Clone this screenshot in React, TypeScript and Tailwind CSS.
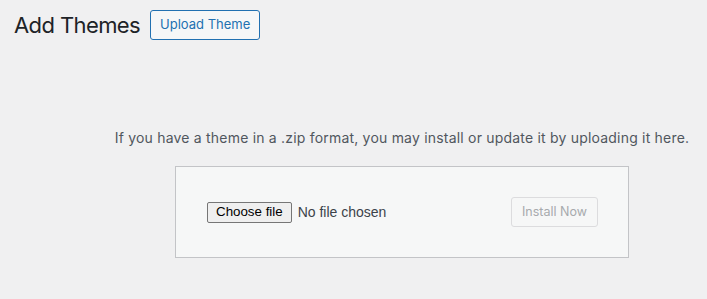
export default function App() {
  return (
    <div className="min-h-screen w-full overflow-hidden bg-[#f0f0f1] text-[#3c434a] font-['Inter','Noto_Sans',sans-serif]">
      <div className="flex items-center gap-[10px] pl-[14px] pt-[10px]">
        <h1 className="text-[22px] leading-[30px] font-normal tracking-[-0.6px] text-[#1d2327]">Add Themes</h1>
        <button className="h-[30px] px-[9px] rounded-[3px] border border-[#2271b1] bg-[#f6f7f7] text-[13px] text-[#2271b1]">
          Upload Theme
        </button>
      </div>

      <div className="ml-[14px] w-[776px] flex flex-col items-center">
        <p className="mt-[87px] text-[14px] leading-[21px] tracking-[0.2px] text-[#50575e]">
          If you have a theme in a .zip format, you may install or update it by uploading it here.
        </p>

        <form className="mt-[18px] w-[454px] border border-[#c3c4c7] bg-[#f6f7f7] py-[30px] pl-[31px] pr-[30px] flex items-center justify-between">
          <div className="flex items-center gap-[6px] font-['Liberation_Sans',Arial,sans-serif]">
            <span className="h-[21px] px-[8px] flex items-center rounded-[2px] border border-[#767676] bg-[#efefef] text-[13.33px] text-[#000]">
              Choose file
            </span>
            <span className="text-[14px] text-[#3c434a]">No file chosen</span>
          </div>
          <button
            type="button"
            disabled
            className="h-[30px] px-[10px] rounded-[3px] border border-[#dcdcde] bg-[#f6f7f7] text-[12.5px] text-[#a7aaad]"
          >
            Install Now
          </button>
        </form>
      </div>
    </div>
  );
}
